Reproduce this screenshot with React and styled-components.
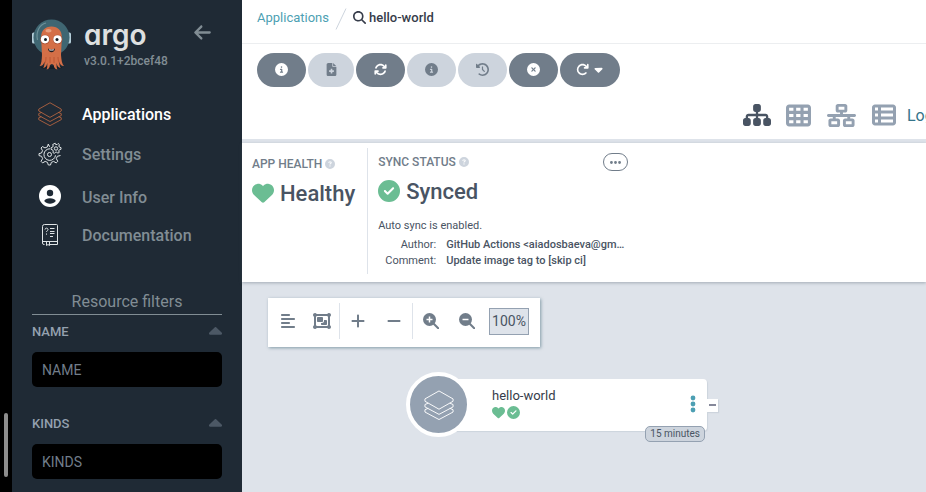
import React from 'react';
import styled, { createGlobalStyle, css } from 'styled-components';
import {
  FaCircleInfo, FaFileMedical, FaArrowsRotate, FaClockRotateLeft, FaCircleXmark,
  FaArrowRotateRight, FaCaretDown, FaSitemap, FaTableCells, FaNetworkWired,
  FaTableList, FaAlignLeft, FaObjectGroup, FaPlus, FaMinus, FaMagnifyingGlass,
  FaHeart, FaCircleCheck, FaCircleQuestion, FaEllipsis, FaArrowLeft,
} from 'react-icons/fa6';

const GlobalStyle = createGlobalStyle`
  *, *::before, *::after { box-sizing: border-box; }
  body { margin: 0; font-family: Roboto, "Liberation Sans", sans-serif; color: #363c4a; }
  button, input { font: inherit; }
  button { cursor: pointer; }
  a { text-decoration: none; }
  svg { display: block; flex: none; }
`;

const Page = styled.div`
  display: flex;
  height: 100vh;
  overflow: hidden;
`;

const Rail = styled.div`
  flex: 0 0 12px;
  display: flex;
  flex-direction: column;
  justify-content: flex-end;
  padding: 0 4px 15px;
  background: #000;
`;

const Thumb = styled.div`
  height: 64px;
  border-radius: 2px;
  background: #8d8d8d;
`;

const Sidebar = styled.aside`
  flex: 0 0 230px;
  padding: 18px 20px 0;
  background: #1f2a35;
  color: #818d94;
`;

const Brand = styled.header`
  display: flex;
  height: 52px;
`;

const BrandText = styled.div`
  margin-left: 13px;
  flex: 1;
`;

const Wordmark = styled.div`
  height: 36px;
  font: 600 28px/34px Inter, sans-serif;
  font-feature-settings: "cv11";
  color: #dee0e0;
`;

const Version = styled.div`
  font-size: 12px;
  line-height: 14px;
  font-weight: 500;
`;

const Collapse = styled.button`
  align-self: flex-start;
  margin: 5px 10px 0 0;
  padding: 0;
  border: 0;
  background: none;
  color: #818d94;
`;

const Nav = styled.nav`
  display: flex;
  flex-direction: column;
  padding-top: 24px;
`;

const NavLink = styled.a`
  display: flex;
  align-items: center;
  height: ${p => p.$height || 40}px;
  padding-left: 6px;
  gap: 20px;
  font-size: 16px;
  font-weight: 500;
  color: ${p => (p.$active ? '#fff' : '#818d94')};
`;

const FilterTitle = styled.h2`
  margin: 41px 0 0;
  height: 24px;
  border-bottom: 1px solid #818d94;
  font-size: 16px;
  line-height: 22px;
  font-weight: 400;
  text-align: center;
`;

const FilterHead = styled.div`
  display: flex;
  align-items: center;
  justify-content: space-between;
  height: 32px;
  margin-bottom: 5px;
  font-size: 13px;
  font-weight: 500;
  color: #94a1af;
`;

const Toggle = styled.button`
  padding: 0;
  border: 0;
  background: none;
  color: #4c5865;
`;

const FilterInput = styled.input`
  display: block;
  width: 100%;
  height: 35px;
  margin-bottom: 20px;
  padding: 0 10px;
  border: 0;
  border-radius: 5px;
  background: #000;
  color: #fff;
  font-size: 14px;
  &::placeholder { color: #717d8a; }
`;

const Main = styled.main`
  flex: 1;
  min-width: 0;
  display: flex;
  flex-direction: column;
  background: #fff;
`;

const Crumbs = styled.div`
  display: flex;
  align-items: center;
  height: 44px;
  padding: 0 15px 8px;
  border-bottom: 1px solid #eceef0;
  font-size: 13px;
`;

const CrumbLink = styled.a`
  color: #4d9fb3;
`;

const Separator = styled.svg`
  margin: 3px 6px 0;
`;

const Current = styled.span`
  display: flex;
  align-items: center;
  gap: 3px;
  font-weight: 500;
`;

const Actions = styled.div`
  display: flex;
  gap: 2px;
  padding: 9px 15px 0;
`;

const Action = styled.button`
  display: flex;
  align-items: center;
  justify-content: center;
  gap: 3px;
  width: ${p => p.$width || 49}px;
  height: 34px;
  padding: 0 0 2px;
  border: 0;
  border-radius: 17px;
  font-size: 13px;
  background: #717d8a;
  color: #fff;
  &:disabled { background: #cdd4dd; color: #717d8a; }
`;

const Views = styled.div`
  display: flex;
  align-items: center;
  justify-content: flex-end;
  height: 56px;
  padding-top: 4px;
  border-bottom: 4px solid #dee3ea;
`;

const ViewButton = styled.button`
  padding: 0;
  margin-right: ${p => p.$gap || 16}px;
  border: 0;
  background: none;
  color: ${p => (p.$active ? '#495463' : '#94a1b1')};
`;

const Logout = styled.a`
  flex: 0 0 19px;
  overflow: hidden;
  white-space: nowrap;
  font-size: 16px;
  color: #35748a;
`;

const Status = styled.section`
  display: flex;
  min-height: 139px;
  padding: 5px 10px 8px;
  box-shadow: 0 1px 3px rgba(73, 87, 99, 0.4);
  position: relative;
  z-index: 1;
`;

const Health = styled.div`
  padding: 10px 12px 0 0;
  border-right: 1px solid #dee3ea;
`;

const Sync = styled.div`
  flex: 0 0 260px;
  padding: 3px 0 0 10px;
`;

const StatusHead = styled.div`
  display: flex;
  align-items: center;
  height: ${p => p.$tall ? 22 : 12}px;
  gap: 3px;
  font-size: 12px;
  font-weight: 500;
  color: #717d8a;
  svg { color: #cdd4dd; }
`;

const StatusValue = styled.div`
  display: flex;
  align-items: center;
  gap: 6px;
  height: 28px;
  margin-top: ${p => p.$top}px;
  font-size: 22px;
  font-weight: 500;
  color: #495463;
  svg { color: #6bbd93; }
`;

const More = styled.button`
  display: flex;
  align-items: center;
  justify-content: center;
  width: 25px;
  height: 18px;
  margin-left: auto;
  padding: 0;
  border: 1px solid #717d8a;
  border-radius: 9px;
  background: #fff;
  && svg { color: #717d8a; }
`;

const SyncNote = styled.p`
  margin: 13px 0 3px;
  font-size: 11px;
  line-height: 16px;
  color: #495463;
`;

const Details = styled.dl`
  display: grid;
  grid-template-columns: 58px 182px;
  column-gap: 10px;
  margin: 0;
  font-size: 11px;
  line-height: 16px;
  color: #495463;
  dt { text-align: right; }
  dd {
    margin: 0;
    overflow: hidden;
    white-space: nowrap;
    text-overflow: ellipsis;
    font-weight: 500;
  }
`;

const Canvas = styled.section`
  flex: 1;
  position: relative;
  padding: 16px 26px;
  background: #dee3ea;
`;

const GraphTools = styled.div`
  display: inline-flex;
  align-items: center;
  height: 49px;
  padding: 0 11px 3px 3px;
  background: #fff;
  box-shadow: 1px 1px 3px rgba(73, 110, 125, 0.6);
`;

const ToolGroup = styled.div`
  display: flex;
  align-items: center;
  height: 36px;
  ${p => p.$divided && css`border-right: 1px solid #dee3ea;`}
`;

const Tool = styled.button`
  display: flex;
  align-items: center;
  justify-content: center;
  width: ${p => p.$width || 36}px;
  height: 36px;
  padding: 0;
  border: 0;
  background: none;
  color: #717d8a;
`;

const Zoom = styled.output`
  width: 40px;
  height: 27px;
  margin-left: 4px;
  border: 1px solid #94a1b1;
  background: #dee3ea;
  font-size: 14px;
  line-height: 25px;
  text-align: center;
  color: #495463;
`;

const Node = styled.article`
  position: absolute;
  left: 196px;
  top: 97px;
  width: 269px;
  height: 52px;
  padding: 9px 0 0 54px;
  border-radius: 4px;
  background: #fff;
  box-shadow: 1px 1px 1px #cdd4dd;
`;

const NodeBadge = styled.div`
  position: absolute;
  left: -32px;
  top: -7px;
  display: grid;
  place-items: center;
  width: 65px;
  height: 65px;
  border: 4px solid #fff;
  border-radius: 50%;
  background: #94a1b1;
`;

const NodeName = styled.div`
  font-size: 13px;
  line-height: 16px;
`;

const NodeState = styled.div`
  display: flex;
  gap: 2px;
  margin-top: 2px;
  color: #6bbd93;
`;

const NodeMenu = styled.button`
  position: absolute;
  right: 11px;
  top: 16px;
  padding: 0;
  border: 0;
  background: none;
  color: #4d9fb3;
`;

const NodeAge = styled.span`
  position: absolute;
  right: 2px;
  bottom: -11px;
  padding: 0 4px;
  border: 1px solid #94a1b1;
  border-radius: 5px;
  background: #cdd4dd;
  font-size: 10px;
  line-height: 14px;
  white-space: nowrap;
  color: #495463;
`;

const NodeFold = styled.button`
  position: absolute;
  left: 269px;
  top: 20px;
  display: grid;
  place-items: center;
  width: 11px;
  height: 13px;
  padding: 0 0 1px;
  border: 0;
  background: #fff;
  color: #85889a;
  box-shadow: 1px 1px 1px #cdd4dd;
`;

const FoldMark = styled.span`
  width: 7px;
  height: 2px;
  background: currentColor;
`;

const Layers = ({ size, color, width = 1 }) => (
  <svg width={size} height={size} viewBox="0 0 32 32" fill="none" stroke={color} strokeWidth={width} strokeLinejoin="round" aria-hidden="true">
    <path d="M16 1 31 9.500v2.500L16 20.500 1 12V9.500Z" />
    <path d="M4.500 14 1 15.500V18l15 8 15-8v-2.500L27.500 14" />
    <path d="M4.500 19.500 1 21v2.500l15 8 15-8V21l-3.500-1.500" />
  </svg>
);

const Gears = () => (
  <svg width="24" height="24" viewBox="0 0 24 24" fill="none" stroke="#dfe4e6" strokeWidth="1" strokeLinejoin="round" aria-hidden="true">
    <path d="M12 4.500 11 4l-.7-2-.9 2.900-2.400 1L4.400 4.600 3 6l1.500 2.700-1 2.300L1 11.600v2l2.600.7 1 2.400L3 19.300l1.600 1.600 2.600-1.500 2.300 1L10.300 23h2.200l.8-2.600 2.300-1 2.600 1.500 1.600-1.600-1.500-2.600 1-2.400 3.200-.8" />
    <path d="M12 6.800a5.800 5.800 0 1 0 5.500 6.500" />
    <circle cx="11.500" cy="12.500" r="2" />
    <path d="m17.200 1.200.5 1.400 1.500-.1 1-1 1.300 1.200-.7 1.300.7 1.200 1.500.4v1.700l-1.500.4-.8 1.200.6 1.400-1.400.9-1.100-1-1.500.1-.9 1.100-1.500-.9.400-1.400-.8-1.300-1.400-.4V5.700l1.500-.5.600-1.200-.5-1.500Z" />
    <circle cx="18" cy="6.500" r="1.700" />
  </svg>
);

const User = () => (
  <svg width="24" height="24" viewBox="0 0 24 24" aria-hidden="true">
    <circle cx="12" cy="11" r="11" fill="#fff" />
    <circle cx="12" cy="8" r="3.200" fill="#1f2a35" />
    <path d="M6.200 16c.8-1.800 3-2.700 5.800-2.700s5 .9 5.800 2.700c-1.500 1.700-3.500 2.700-5.800 2.700S7.700 17.700 6.200 16Z" fill="#1f2a35" />
  </svg>
);

const Book = () => (
  <svg width="24" height="24" viewBox="0 0 24 24" fill="none" stroke="#dfe4e6" strokeWidth="1" strokeLinejoin="round" aria-hidden="true">
    <path d="M6.500 21.500H6a1.500 1.500 0 0 1-1.500-1.500V3.500a2 2 0 0 1 2-2h12a1 1 0 0 1 1 1v19H12M5 18.500h14.500" />
    <path d="M8.500 18.500v4l1.500-1 1.500 1v-4Z" />
    <path d="M7 6.500c0-1.800 3-1.800 3 0 0 1.300-1.500 1.200-1.500 2.500M8.500 10.500v1.200M12 5.500h4.500M12 8.500h4.500M12 10.500h4.500M12 13.500h3" />
  </svg>
);

const Chevron = () => (
  <svg width="13" height="8" viewBox="0 0 13 8" fill="currentColor" aria-hidden="true">
    <path d="M5.600.4a1.300 1.300 0 0 1 1.800 0l5.200 5c1 .9.500 2.300-.8 2.300H1.200C-.1 7.700-.6 6.300.4 5.400Z" />
  </svg>
);

const Octopus = () => (
  <svg width="39" height="52" viewBox="0 0 39 52" role="img" aria-label="Argo">
    <rect x="0" y="14.500" width="4" height="11" rx="1.500" fill="#b4ced9" />
    <rect x="35" y="14.500" width="4" height="11" rx="1.500" fill="#b4ced9" />
    <circle cx="19.500" cy="19.500" r="18" fill="#3f6672" />
    <path d="M5.500 22C3.500 13 8 6.500 14 5" fill="none" stroke="#8aaeb4" strokeWidth="1.200" opacity=".6" />
    <ellipse cx="19.500" cy="49.500" rx="11" ry="1.500" fill="#151f28" />
    <path d="M10 37c-.2-5.500-.5-10-.8-17.500C8.900 12.500 13 8.500 19.500 8.500S30 12.500 29.800 19.500c-.2 7.500-.6 12-.8 17.500.4 5 1 9 3 11-2.600 0-4-1.500-4.800-4.500.1 3 .4 4.800 1.500 6.500-2.500-.3-3.700-2-4-5-.2 2.500-.2 4.500.7 6.500-2.500-.5-3.400-2-3.700-4.500l-1.800-1-2 1c-.2 2.500-1 4-3.300 4.500.8-2 .8-4 .6-6.500-.5 3-1.700 4.700-4 5 1-1.700 1.400-3.500 1.400-6.500-1 3-2.400 4.500-5 4.500 1.800-2 2.200-6 2.400-11Z" fill="#d46f47" />
    <path d="M14 39c0 3-.4 4-1 6m5-6v6m4-6v6m4-6c.1 3 .4 3.500 1 5.500" fill="none" stroke="#b75231" strokeWidth=".8" />
    <ellipse cx="16.500" cy="12.800" rx="3" ry="1.700" fill="#e7a182" />
    <circle cx="13" cy="21.500" r="4.800" fill="#a94e32" />
    <circle cx="25.700" cy="21.500" r="4.800" fill="#a94e32" />
    <circle cx="13" cy="21.300" r="4.100" fill="#fff" />
    <circle cx="25.500" cy="21.300" r="4.100" fill="#fff" />
    <circle cx="13.500" cy="21.500" r="1.500" fill="#111c24" />
    <circle cx="25" cy="21.500" r="1.500" fill="#111c24" />
    <path d="M16 30.500c2.200 1.300 4.800 1.300 7 0-.2 2.500-1.600 3.800-3.500 3.800S16.200 33 16 30.500Z" fill="#211d21" />
    <path d="M17 31.200c1.500.6 3.500.6 5 0l-.6 1.200h-3.800Z" fill="#fff" />
  </svg>
);

const SolidLens = ({ plus }) => (
  <svg width="16" height="16" viewBox="0 0 16 16" aria-hidden="true">
    <circle cx="6.500" cy="6.500" r="6.500" fill="currentColor" />
    <path d="m10 10 5.200 5.200" stroke="currentColor" strokeWidth="2" strokeLinecap="round" />
    <path d={plus ? 'M3.500 6.500h6m-3-3v6' : 'M3.500 6.500h6'} stroke="#fff" strokeWidth="1.500" />
  </svg>
);

const Filter = ({ label }) => (
  <>
    <FilterHead>
      <label htmlFor={label}>{label}</label>
      <Toggle aria-label={`Collapse ${label}`}><Chevron /></Toggle>
    </FilterHead>
    <FilterInput id={label} placeholder={label} />
  </>
);

export default function App() {
  return (
    <Page>
      <GlobalStyle />
      <Rail><Thumb /></Rail>
      <Sidebar>
        <Brand>
          <Octopus />
          <BrandText>
            <Wordmark>argo</Wordmark>
            <Version>v3.0.1+2bcef48</Version>
          </BrandText>
          <Collapse aria-label="Collapse sidebar"><FaArrowLeft size={19} /></Collapse>
        </Brand>
        <Nav>
          <NavLink href="#applications" $active><Layers size={24} color="#cf6f43" />Applications</NavLink>
          <NavLink href="#settings"><Gears />Settings</NavLink>
          <NavLink href="#user" $height={46}><User />User Info</NavLink>
          <NavLink href="#docs" $height={30}><Book />Documentation</NavLink>
        </Nav>
        <FilterTitle>Resource filters</FilterTitle>
        <Filter label="NAME" />
        <Filter label="KINDS" />
      </Sidebar>
      <Main>
        <Crumbs>
          <CrumbLink href="#applications">Applications</CrumbLink>
          <Separator width="12" height="22" viewBox="0 0 12 22"><path d="M1 21.500 11 .5" stroke="#cdd4dd" /></Separator>
          <Current><FaMagnifyingGlass size={13} />hello-world</Current>
        </Crumbs>
        <Actions>
          <Action aria-label="Details"><FaCircleInfo /></Action>
          <Action aria-label="Diff" $width={46} disabled><FaFileMedical /></Action>
          <Action aria-label="Sync"><FaArrowsRotate /></Action>
          <Action aria-label="Sync status" disabled><FaCircleInfo /></Action>
          <Action aria-label="History and rollback" disabled><FaClockRotateLeft /></Action>
          <Action aria-label="Delete"><FaCircleXmark /></Action>
          <Action aria-label="Refresh" $width={60}><FaArrowRotateRight /><FaCaretDown /></Action>
        </Actions>
        <Views>
          <ViewButton aria-label="Tree" $active $gap={15}><FaSitemap size={28} /></ViewButton>
          <ViewButton aria-label="Pods"><FaTableCells size={25} /></ViewButton>
          <ViewButton aria-label="Network"><FaNetworkWired size={29} /></ViewButton>
          <ViewButton aria-label="List" $gap={11}><FaTableList size={24} /></ViewButton>
          <Logout href="#logout">Log out</Logout>
        </Views>
        <Status>
          <Health>
            <StatusHead>APP HEALTH <FaCircleQuestion size={10} /></StatusHead>
            <StatusValue $top={9}><FaHeart size={22} />Healthy</StatusValue>
          </Health>
          <Sync>
            <StatusHead $tall>
              SYNC STATUS <FaCircleQuestion size={10} />
              <More aria-label="More"><FaEllipsis size={13} /></More>
            </StatusHead>
            <StatusValue $top={4}><FaCircleCheck size={22} />Synced</StatusValue>
            <SyncNote>Auto sync is enabled.</SyncNote>
            <Details>
              <dt>Author:</dt><dd>GitHub Actions &lt;aiadosbaeva@gmail.com&gt;</dd>
              <dt>Comment:</dt><dd>Update image tag to [skip ci]</dd>
            </Details>
          </Sync>
        </Status>
        <Canvas>
          <GraphTools>
            <ToolGroup $divided>
              <Tool aria-label="Align" $width={34}><FaAlignLeft size={16} /></Tool>
              <Tool aria-label="Group nodes" $width={34}><FaObjectGroup size={18} /></Tool>
            </ToolGroup>
            <ToolGroup $divided>
              <Tool aria-label="Expand all"><FaPlus size={16} /></Tool>
              <Tool aria-label="Collapse all"><FaMinus size={16} /></Tool>
            </ToolGroup>
            <ToolGroup>
              <Tool aria-label="Zoom in"><SolidLens plus /></Tool>
              <Tool aria-label="Zoom out"><SolidLens /></Tool>
              <Zoom>100%</Zoom>
            </ToolGroup>
          </GraphTools>
          <Node>
            <NodeBadge><Layers size={30} color="#fff" /></NodeBadge>
            <NodeName>hello-world</NodeName>
            <NodeState><FaHeart size={13} /><FaCircleCheck size={13} /></NodeState>
            <NodeMenu aria-label="Node menu">
              <svg width="6" height="18" viewBox="0 0 6 18" fill="currentColor">
                <circle cx="3" cy="3" r="2.400" /><circle cx="3" cy="9" r="2.400" /><circle cx="3" cy="15" r="2.400" />
              </svg>
            </NodeMenu>
            <NodeAge>15 minutes</NodeAge>
            <NodeFold aria-label="Collapse node"><FoldMark /></NodeFold>
          </Node>
        </Canvas>
      </Main>
    </Page>
  );
}
